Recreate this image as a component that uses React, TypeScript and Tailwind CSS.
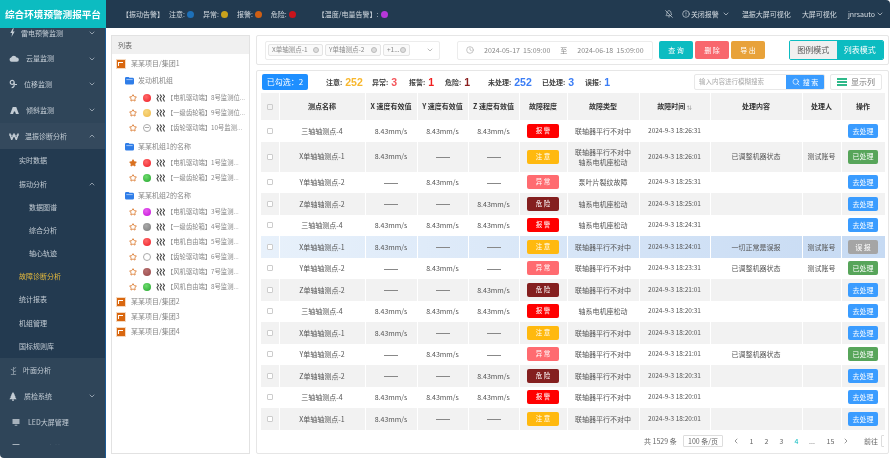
import {
  AlertCircle,
  BellOff,
  ChevronDown,
  ChevronLeft,
  ChevronRight,
  ChevronUp,
  Clock,
  Search,
  Star,
} from "lucide-react";
import type { ReactNode } from "react";

const sideMain = "flex h-[25.8px] items-center text-[7px] text-[#c3ccd4]";
const sideSub = "flex h-[23.2px] items-center text-[7px] text-[#c3ccd4]";

const colors = {
  red: "bg-[radial-gradient(circle_at_40%_35%,#ff6a6a,#ee1c25)]",
  yellow: "bg-[radial-gradient(circle_at_40%_35%,#f8d880,#eeb84a)]",
  green: "bg-[radial-gradient(circle_at_40%_35%,#6fdc6f,#22a52c)]",
  purple: "bg-[radial-gradient(circle_at_40%_35%,#e860f0,#c410d8)]",
  gray: "bg-[radial-gradient(circle_at_40%_35%,#aaaaaa,#7b7b7b)]",
  brown: "bg-[radial-gradient(circle_at_40%_35%,#b87070,#984848)]",
  white: "bg-white border border-[#aaaaaa]",
};

const group0 = [
  { c: colors.red, t: "【电机驱动端】8号监测位..." },
  { c: colors.yellow, t: "【一级齿轮箱】9号监测位..." },
  { c: colors.white, t: "【齿轮驱动端】10号监测...", line: true },
];
const group1 = [
  { c: colors.red, t: "【电机驱动端】1号监测...", on: true },
  { c: colors.green, t: "【一级齿轮箱】2号监测..." },
];
const group2 = [
  { c: colors.purple, t: "【电机驱动端】3号监测..." },
  { c: colors.gray, t: "【一级齿轮箱】4号监测..." },
  { c: colors.red, t: "【电机自由端】5号监测..." },
  { c: colors.white, t: "【齿轮驱动端】6号监测..." },
  { c: colors.brown, t: "【风机驱动端】7号监测..." },
  { c: colors.green, t: "【风机自由端】8号监测..." },
];

const levels: Record<string, string> = {
  报警: "bg-[#ff0000]",
  注意: "bg-[#ffb90f]",
  异常: "bg-[#ff6b70]",
  危险: "bg-[#841f1f]",
};

const v = "8.43mm/s";
const points = [
  { name: "三轴轴测点-4", x: v, y: v, z: v, level: "报警" },
  { name: "X单轴轴测点-1", x: v, y: "", z: "", level: "注意" },
  { name: "Y单轴轴测点-2", x: "", y: v, z: "", level: "异常" },
  { name: "Z单轴轴测点-2", x: "", y: "", z: v, level: "危险" },
];

const c1 = "联轴器平行不对中";
const c2 = "轴系电机座松动";
const done = "已调整机器状态";
const rows = [
  { type: c1, time: "18:26:31" },
  { type: c1, type2: "轴系电机座松动", time: "18:26:01", note: done, who: "测试账号", op: "已处理" },
  { type: "泵叶片裂纹故障", time: "18:25:31" },
  { type: c2, time: "18:25:01" },
  { type: c2, time: "18:24:31" },
  { type: c1, time: "18:24:01", note: "一切正常是误报", who: "测试账号", op: "误 报" },
  { type: c1, time: "18:23:31", note: done, who: "测试账号", op: "已处理" },
  { type: c1, time: "18:21:01" },
  { type: c2, time: "18:20:31" },
  { type: c1, time: "18:20:01" },
  { type: c1, time: "18:21:01", note: done, op: "已处理" },
  { type: c1, time: "18:20:31" },
  { type: c1, time: "18:20:01" },
  { type: c1, time: "18:20:01" },
];

// sidebar glyphs, the icon packages have nothing close to these
const ZapGlyph = (
  <svg viewBox="0 0 8 10" className="h-[9px] w-[7px]" fill="#c3ccd4">
    <path d="M4.5 0 L1.5 5.5 H3.6 L2.8 10 L6.5 3.8 H4.4 L5.5 0 Z" />
  </svg>
);
const CloudGlyph = (
  <svg viewBox="0 0 12 8" className="h-[7px] w-[10px]" fill="#c3ccd4">
    <path d="M3 8 A2.6 2.6 0 0 1 2.6 2.9 A3.4 3.4 0 0 1 9 2.8 A2.6 2.6 0 0 1 9.4 8 Z" />
  </svg>
);
const ShiftGlyph = (
  <svg viewBox="0 0 9 10" className="h-[10px] w-[8px]" fill="none" stroke="#c3ccd4" strokeWidth="1.3">
    <circle cx="3.6" cy="3.2" r="2.2" />
    <path d="M5.8 3.2 V6.8 Q5.6 9 3 9" />
    <path d="M6 5.6 H9" />
  </svg>
);
const SlopeGlyph = (
  <svg viewBox="0 0 10 8" className="h-[7px] w-[9px]" fill="#c3ccd4">
    <path d="M3 0 H7 L10 8 H6.6 L5.6 5 H4.4 L3.4 8 H0 Z" />
  </svg>
);
const WGlyph = (
  <svg viewBox="0 0 11 8" className="h-[7px] w-[10px]" fill="none" stroke="#c3ccd4" strokeWidth="1.7">
    <path d="M.6 .5 L2.9 7.4 L5.5 1.5 L8.1 7.4 L10.4 .5" />
    <path d="M0 2.6 H11" strokeWidth=".8" />
  </svg>
);
const SproutGlyph = (
  <svg viewBox="0 0 8 10" className="h-[9px] w-[7px]" fill="none" stroke="#8e9ca8" strokeWidth="1">
    <path d="M4 1 V9.5 M4 3 L7 1.5 M4 5 L1 3.5 M4 6.5 L7 5.5 M1 9.5 H7" />
  </svg>
);
const TreeGlyph = (
  <svg viewBox="0 0 8 10" className="h-[9px] w-[8px]" fill="#c3ccd4">
    <path d="M4 0 L6 3 H5.4 L7 5.4 H6.2 L8 8 H0 L1.8 5.4 H1 L2.6 3 H2 Z" />
    <path d="M3.2 8 H4.8 V10 H3.2 Z" />
  </svg>
);
const ScreenGlyph = (
  <svg viewBox="0 0 8 8" className="h-[7px] w-[8px]" fill="#a7b2bc">
    <path d="M0 0 H8 V5.6 H0 Z M2.5 6.6 H5.5 V7.6 H2.5 Z" />
  </svg>
);

const mainMenu: { icon: ReactNode; t: string; pl: string; ml: string }[] = [
  { icon: ZapGlyph, t: "雷电预警监测", pl: "pl-[9px]", ml: "ml-[5px]" },
  { icon: CloudGlyph, t: "云量监测", pl: "pl-[9px]", ml: "ml-[7px]" },
  { icon: ShiftGlyph, t: "位移监测", pl: "pl-[9px]", ml: "ml-[7px]" },
  { icon: SlopeGlyph, t: "倾斜监测", pl: "pl-[10px]", ml: "ml-[7px]" },
];

function ProjectIcon() {
  return (
    <span className="mr-[6px] flex h-[8px] w-[8px] shrink-0 items-start justify-end bg-[#d9670f] p-[1px] ring-1 ring-[#f5d9c0]">
      <span className="mr-[1px] mt-[1px] h-[4px] w-[5px] border-l border-t border-white" />
    </span>
  );
}

function FolderIcon() {
  return (
    <svg viewBox="0 0 12 10" className="mr-[3px] h-[9px] w-[11px] shrink-0">
      <path d="M1 2.5 Q1 1 2.5 1 H5 L6 2 H9.5 Q11 2 11 3.5 V8 Q11 9.5 9.5 9.5 H2.5 Q1 9.5 1 8 Z" fill="#2f7de8" />
      <path d="M2.5 4 H9.5" stroke="#a9cbf8" strokeWidth="1" />
    </svg>
  );
}

function WaveIcon() {
  return (
    <svg viewBox="0 0 9 8" className="mr-[2px] h-[8px] w-[9px] shrink-0" fill="none" stroke="#444444" strokeWidth="1.1">
      <path d="M1 .5 L2.5 2.5 L1 4.5 L2.5 7.5" />
      <path d="M4 .5 L5.5 2.5 L4 4.5 L5.5 7.5" />
      <path d="M7 .5 L8.5 2.5 L7 4.5 L8.5 7.5" />
    </svg>
  );
}

function PointRow({ c, t, on, line }: { c: string; t: string; on?: boolean; line?: boolean }) {
  return (
    <div className="flex h-[15px] items-center pl-[12px] text-[6.3px] text-[#888888]">
      <Star className={`mr-[6px] h-[8px] w-[8px] shrink-0 text-[#d9701f] ${on ? "fill-[#d9701f]" : ""}`} strokeWidth={2.5} />
      <span className={`mr-[5px] flex h-[8px] w-[8px] shrink-0 items-center justify-center rounded-full ${c}`}>
        {line && <span className="h-px w-[4px] bg-[#aaaaaa]" />}
      </span>
      <WaveIcon />
      <span className="whitespace-nowrap">{t}</span>
    </div>
  );
}

function Dot({ c }: { c: string }) {
  return <span className={`ml-[2px] h-[7px] w-[7px] rounded-full ${c}`} />;
}

function Stat({ label, value, color, w }: { label: string; value: string; color: string; w: string }) {
  return (
    <div className={`flex shrink-0 items-center gap-[3px] ${w}`}>
      <span className="text-[7px] font-bold text-[#444444]">{label}</span>
      <span className={`font-['Liberation_Sans'] text-[10.5px] font-bold leading-none ${color}`}>{value}</span>
    </div>
  );
}

function Tag({ text, w }: { text: string; w: string }) {
  return (
    <span className={`flex h-[12px] shrink-0 items-center justify-between rounded-[2px] border border-[#e4e4e4] bg-[#fafafa] px-[3px] text-[6.5px] text-[#888888] ${w}`}>
      {text}
      <span className="h-[6px] w-[6px] shrink-0 rounded-full border border-[#bbbbbb] bg-[#dddddd]" />
    </span>
  );
}

function Dash() {
  return <span className="inline-block h-[1px] w-[14px] bg-[#888888] align-middle" />;
}

export default function App() {
  return (
    <div className="flex h-[460px] w-[890px] flex-col overflow-hidden bg-white font-['Noto_Sans_CJK_SC','Liberation_Sans',sans-serif] blur-[0.4px]">
      <header className="flex h-[28px] shrink-0 items-center rounded-tr-[4px] bg-[#223a50] text-[7px] text-[#d5dce2]">
        <div className="flex h-full w-[106px] shrink-0 items-center justify-center bg-[#0cbcc1] text-[9.6px] font-bold text-white">
          综合环境预警测报平台
        </div>
        <div className="ml-[16px] flex items-center">
          <span className="w-[47px]">【振动告警】</span>
          <span>注意:</span>
          <Dot c="mx-[3px] bg-[#1d70b8]" />
          <span className="ml-[6px]">异常:</span>
          <Dot c="mx-[3px] bg-[#c9a21c]" />
          <span className="ml-[6px]">报警:</span>
          <Dot c="mx-[3px] bg-[#cf5f14]" />
          <span className="ml-[6px]">危险:</span>
          <Dot c="mx-[3px] bg-[#c9141c]" />
          <span className="ml-[19px]">【温度/电量告警】:</span>
          <Dot c="bg-[#b637d8]" />
        </div>
        <div className="ml-auto flex items-center pr-[6px]">
          <BellOff className="mr-[9px] h-[8px] w-[8px]" />
          <AlertCircle className="mr-[1px] h-[8px] w-[8px]" />
          <span>关闭报警</span>
          <ChevronDown className="ml-[3px] mr-[12px] h-[8px] w-[8px]" />
          <span className="mr-[11px]">温振大屏可视化</span>
          <span className="mr-[11px]">大屏可视化</span>
          <span>jnrsauto</span>
          <ChevronDown className="ml-[1px] h-[8px] w-[8px]" />
        </div>
      </header>

      <div className="flex min-h-0 flex-1">
        <aside className="mb-[2px] flex w-[106px] shrink-0 flex-col overflow-hidden rounded-bl-[4px] border-r border-[#1c5b96] bg-[#2f4559]">
          <nav className="h-[417px] overflow-hidden">
            <div className="-mt-[8px]">
              {mainMenu.map((m) => (
                <div key={m.t} className={`${sideMain} ${m.pl} pr-[9px]`}>
                  {m.icon}
                  <span className={m.ml}>{m.t}</span>
                  <ChevronDown className="ml-auto h-[8px] w-[8px]" />
                </div>
              ))}
              <div className={`${sideMain} bg-[#34495d] pl-[9px] pr-[9px]`}>
                {WGlyph}
                <span className="ml-[6px]">温振诊断分析</span>
                <ChevronUp className="ml-auto h-[8px] w-[8px]" />
              </div>
              <div className="bg-[#233a50]">
                <div className={`${sideSub} pl-[19px]`}>实时数据</div>
                <div className={`${sideSub} pl-[19px] pr-[9px]`}>
                  振动分析
                  <ChevronUp className="ml-auto h-[8px] w-[8px]" />
                </div>
                <div className={`${sideSub} pl-[29px]`}>数据图谱</div>
                <div className={`${sideSub} pl-[29px]`}>综合分析</div>
                <div className={`${sideSub} pl-[29px]`}>轴心轨迹</div>
                <div className={`${sideSub} pl-[19px] !text-[#e5b93c]`}>故障诊断分析</div>
                <div className={`${sideSub} pl-[19px]`}>统计报表</div>
                <div className={`${sideSub} pl-[19px]`}>机组管理</div>
                <div className={`${sideSub} pl-[19px]`}>国标规则库</div>
              </div>
              <div className={`${sideMain} pl-[10px]`}>
                {SproutGlyph}
                <span className="ml-[6px]">叶面分析</span>
              </div>
              <div className={`${sideMain} pl-[9px] pr-[9px]`}>
                {TreeGlyph}
                <span className="ml-[7px]">质检系统</span>
                <ChevronDown className="ml-auto h-[8px] w-[8px]" />
              </div>
              <div className={`${sideMain} pl-[12px]`}>
                {ScreenGlyph}
                <span className="ml-[8px]">LED大屏管理</span>
              </div>
              <div className={`${sideMain} pl-[12px]`}>
                {ScreenGlyph}
                <span className="ml-[8px]">LED设备管理</span>
              </div>
            </div>
          </nav>
        </aside>

        <section className="mb-[6px] ml-[5px] mt-[7px] flex w-[139px] shrink-0 flex-col overflow-hidden border border-[#e2e2e2]">
          <div className="flex h-[18px] items-center bg-[#f0f0f0] pl-[6px] text-[7px] text-[#666666]">列表</div>
          <div className="pl-[5px] pr-[3px] pt-[2px]">
            <div className="flex h-[15px] items-center text-[7px] text-[#888888]">
              <ProjectIcon />
              某某项目/集团1
            </div>
            <div className="flex h-[19px] items-center pl-[7px] text-[7px] text-[#888888]">
              <FolderIcon />
              发动机机组
            </div>
            {group0.map((p) => (
              <PointRow key={p.t} {...p} />
            ))}
            <div className="flex h-[20px] items-center pl-[7px] pt-[2px] text-[7px] text-[#888888]">
              <FolderIcon />
              某某机组1的名称
            </div>
            {group1.map((p) => (
              <PointRow key={p.t} {...p} />
            ))}
            <div className="flex h-[19px] items-center pl-[7px] pt-[2px] text-[7px] text-[#888888]">
              <FolderIcon />
              某某机组2的名称
            </div>
            {group2.map((p) => (
              <PointRow key={p.t} {...p} />
            ))}
            {["某某项目/集团2", "某某项目/集团3", "某某项目/集团4"].map((p) => (
              <div key={p} className="flex h-[15px] items-center text-[7px] text-[#888888]">
                <ProjectIcon />
                {p}
              </div>
            ))}
          </div>
        </section>

        <main className="mb-[6px] ml-[6px] mr-px mt-[7px] flex min-w-0 flex-1 flex-col gap-[5px]">
          <div className="flex h-[30px] shrink-0 items-center rounded-[2px] border border-[#e6e6e6] pl-[8px]">
            <div className="flex h-[19px] w-[175px] items-center gap-[2px] rounded-[2px] border border-[#ececec] pl-[2px] pr-[5px]">
              <Tag text="X单轴测点-1" w="w-[55px]" />
              <Tag text="Y单轴测点-2" w="w-[56px]" />
              <Tag text="+1..." w="w-[27px]" />
              <ChevronDown className="ml-auto h-[8px] w-[8px] text-[#999999]" />
            </div>
            <div className="ml-[17px] flex h-[19px] w-[196px] items-center rounded-[2px] border border-[#ececec] pl-[8px] text-[7px] text-[#888888]">
              <Clock className="mr-[10px] h-[8px] w-[8px] text-[#aaaaaa]" />
              <span>2024-05-17&nbsp; 15:09:00</span>
              <span className="mx-[10px]">至</span>
              <span>2024-06-18&nbsp; 15:09:00</span>
            </div>
            <div className="ml-[6px] flex gap-[2px] text-[7px] text-white">
              <span className="flex h-[18px] w-[34px] items-center justify-center rounded-[2px] bg-[#0cbcc1]">查 询</span>
              <span className="flex h-[18px] w-[34px] items-center justify-center rounded-[2px] bg-[#f8676d]">删 除</span>
              <span className="flex h-[18px] w-[34px] items-center justify-center rounded-[2px] bg-[#e8a23a]">导 出</span>
            </div>
            <div className="ml-[24px] flex h-[20px] w-[95px] overflow-hidden rounded-[2px] border border-[#0cbcc1] text-[8px]">
              <span className="flex flex-1 items-center justify-center bg-[#f0f0f0] text-[#555555]">图例模式</span>
              <span className="flex flex-1 items-center justify-center bg-[#0cbcc1] text-white">列表模式</span>
            </div>
          </div>

          <div className="flex min-h-0 flex-1 flex-col rounded-[2px] border border-[#e6e6e6] px-[4px]">
            <div className="flex h-[22px] shrink-0 items-center pl-[1px]">
              <span className="flex h-[16px] w-[46px] shrink-0 items-center justify-center rounded-[2px] bg-[#1e8fff] text-[8px] text-white">已勾选：2</span>
              <div className="ml-[18px] flex items-center">
                <Stat label="注意:" value="252" color="text-[#f8b72d]" w="w-[46px]" />
                <Stat label="异常:" value="3" color="text-[#f4555a]" w="w-[37px]" />
                <Stat label="报警:" value="1" color="text-[#f01f1f]" w="w-[36px]" />
                <Stat label="危险:" value="1" color="text-[#8a1f1f]" w="w-[43px]" />
                <Stat label="未处理:" value="252" color="text-[#3b7df5]" w="w-[54px]" />
                <Stat label="已处理:" value="3" color="text-[#3b7df5]" w="w-[43px]" />
                <Stat label="误报:" value="1" color="text-[#3b7df5]" w="w-[26px]" />
              </div>
              <div className="ml-auto flex items-center">
                <div className="flex h-[16px] w-[131px] overflow-hidden rounded-[2px] border border-[#e8e8e8]">
                  <span className="flex flex-1 items-center pl-[4px] text-[6.5px] text-[#aaaaaa]">输入内容进行模糊搜索</span>
                  <span className="flex w-[38px] items-center justify-center gap-[3px] bg-[#3a9cff] text-[7px] text-white">
                    <Search className="h-[8px] w-[8px]" />
                    搜 索
                  </span>
                </div>
                <div className="ml-[5px] mr-[2px] flex h-[16px] w-[52px] items-center justify-center gap-[4px] rounded-[2px] border border-[#e8e8e8] text-[8px] text-[#777777]">
                  <span className="flex flex-col gap-[1px]">
                    <span className="h-[2px] w-[10px] bg-[#2fb98a]" />
                    <span className="h-[2px] w-[10px] bg-[#2fb98a]" />
                    <span className="h-[2px] w-[10px] bg-[#2fb98a]" />
                  </span>
                  显示列
                </div>
              </div>
            </div>

            <table className="w-[624px] table-fixed border-collapse text-center text-[7px] text-[#555555]">
              <colgroup>
                <col className="w-[18px]" />
                <col className="w-[86px]" />
                <col className="w-[52px]" />
                <col className="w-[51px]" />
                <col className="w-[51px]" />
                <col className="w-[48px]" />
                <col className="w-[72px]" />
                <col className="w-[71px]" />
                <col className="w-[92px]" />
                <col className="w-[39px]" />
                <col className="w-[44px]" />
              </colgroup>
              <thead>
                <tr className="h-[27px] bg-[#f2f2f2] text-[#333333] [&>th]:border-r [&>th]:border-white [&>th]:font-bold">
                  <th>
                    <span className="mx-auto block h-[6px] w-[6px] rounded-[1px] border border-[#cccccc]" />
                  </th>
                  <th>测点名称</th>
                  <th>X 速度有效值</th>
                  <th>Y 速度有效值</th>
                  <th>Z 速度有效值</th>
                  <th>故障程度</th>
                  <th>故障类型</th>
                  <th>
                    故障时间 <span className="text-[5px] text-[#999999]">⇅</span>
                  </th>
                  <th>处理内容</th>
                  <th>处理人</th>
                  <th>操作</th>
                </tr>
              </thead>
              <tbody>
                {rows.map((r, i) => {
                  const p = points[i % 4];
                  const bg =
                    i === 5
                      ? "bg-gradient-to-r from-[#e8f1fb] to-[#c6daf3]"
                      : i % 2 === 1
                        ? "bg-[#f2f2f2]"
                        : "bg-white";
                  const opBg = r.op === "已处理" ? "bg-[#57a55a]" : r.op === "误 报" ? "bg-[#a5a5a5]" : "bg-[#3a9cff]";
                  return (
                    <tr key={i} className={`${bg} ${r.type2 ? "h-[30px]" : "h-[21.5px]"} [&>td]:border-r [&>td]:border-white [&>td]:p-0`}>
                      <td>
                        <span className="mx-auto block h-[6px] w-[6px] rounded-[1px] border border-[#cccccc] bg-white" />
                      </td>
                      <td>{p.name}</td>
                      <td>{p.x || <Dash />}</td>
                      <td>{p.y || <Dash />}</td>
                      <td>{p.z || <Dash />}</td>
                      <td>
                        <span className={`mx-auto flex h-[14px] w-[32px] items-center justify-center rounded-[2px] text-[6.5px] text-white ${levels[p.level]}`}>
                          {p.level[0]} {p.level[1]}
                        </span>
                      </td>
                      <td className="leading-[10px]">
                        {r.type}
                        {r.type2 && <br />}
                        {r.type2}
                      </td>
                      <td className="text-[6.5px]">2024-9-3 {r.time}</td>
                      <td>{r.note}</td>
                      <td>{r.who}</td>
                      <td>
                        <span className={`mx-auto flex h-[14px] w-[30px] items-center justify-center rounded-[2px] text-[7px] text-white ${opBg}`}>
                          {r.op || "去处理"}
                        </span>
                      </td>
                    </tr>
                  );
                })}
              </tbody>
            </table>

            <div className="flex flex-1 items-center overflow-hidden pb-[1px] pl-[383px] text-[7px] text-[#666666]">
              <span className="w-[39px] shrink-0">共 1529 条</span>
              <span className="flex h-[12px] w-[40px] shrink-0 items-center justify-center rounded-[1px] border border-[#dddddd]">100 条/页</span>
              <ChevronLeft className="ml-[9px] h-[8px] w-[8px] shrink-0" />
              <span className="ml-[4px] w-[15px] shrink-0 text-center">1</span>
              <span className="w-[15px] shrink-0 text-center">2</span>
              <span className="w-[15px] shrink-0 text-center">3</span>
              <span className="w-[15px] shrink-0 text-center text-[#0cbcc1]">4</span>
              <span className="w-[16px] shrink-0 text-center">...</span>
              <span className="ml-[3px] w-[15px] shrink-0 text-center">15</span>
              <ChevronRight className="ml-[4px] h-[8px] w-[8px] shrink-0" />
              <span className="ml-[14px] shrink-0">前往</span>
              <span className="ml-[3px] h-[12px] w-[12px] shrink-0 rounded-[1px] border border-[#dddddd]" />
            </div>
          </div>
        </main>
      </div>
    </div>
  );
}
